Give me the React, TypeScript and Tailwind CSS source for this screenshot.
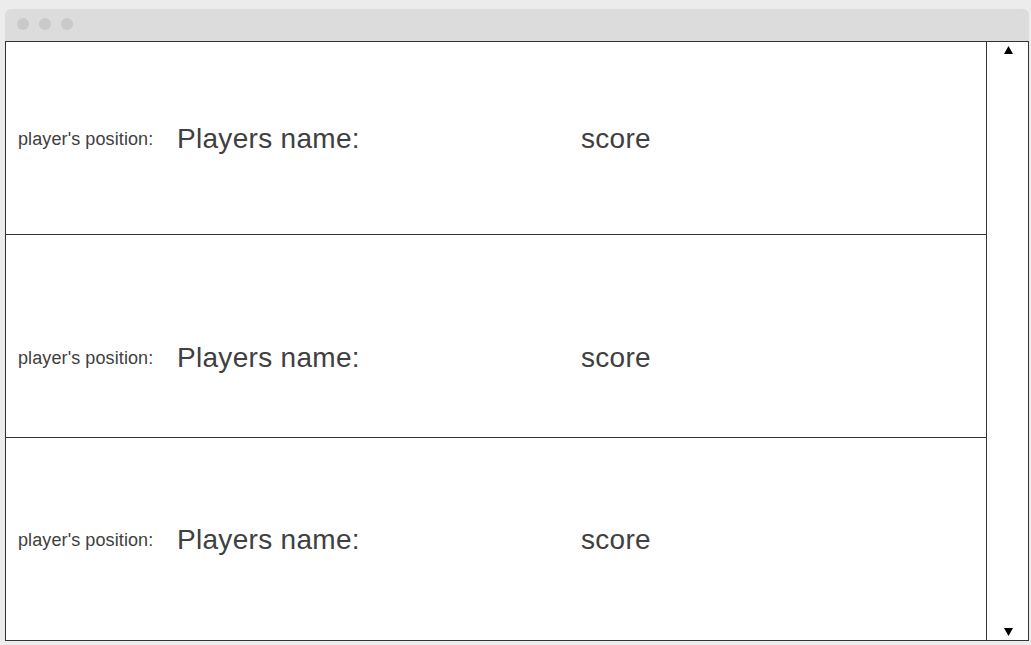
const rows = [
  { h: 'h-[193px]', extra: 'pt-[2px]' },
  { h: 'h-[203px]', extra: 'pt-[44px]' },
  { h: 'h-[202px]', extra: 'pt-[2px]' },
];

function Arrow({ down }: { down?: boolean }) {
  return (
    <svg width="9" height="8" viewBox="0 0 9 8" className="block">
      {down ? <polygon points="0,0 9,0 4.5,8" fill="#000" /> : <polygon points="4.5,0 9,8 0,8" fill="#000" />}
    </svg>
  );
}

export default function App() {
  return (
    <div
      className="w-[1031px] h-[645px] bg-[#ececec] pt-[9px] pl-[5px] text-[#404040]"
      style={{ fontFamily: '"Liberation Sans", Arial, sans-serif' }}
    >
      <div className="w-[1024px]">
        <div className="h-[32px] bg-[#dcdcdc] rounded-t-[6px] flex items-center gap-[10px] pl-[12px] pb-[2px]">
          <div className="w-[12px] h-[12px] rounded-full bg-[#c9c9c9]" />
          <div className="w-[12px] h-[12px] rounded-full bg-[#c9c9c9]" />
          <div className="w-[12px] h-[12px] rounded-full bg-[#c9c9c9]" />
        </div>
        <div className="h-[600px] border border-[#333] bg-white flex">
          <div className="flex-1 flex flex-col">
            {rows.map((r, i) => (
              <div
                key={i}
                className={`${r.h} ${r.extra} flex items-center pl-[12px] ${i < 2 ? 'border-b border-[#333]' : ''}`}
              >
                <div className="w-[159px] text-[18px] tracking-[0.1px]">player's position:</div>
                <div className="w-[404px] text-[28px] tracking-[0.3px]">Players name:</div>
                <div className="text-[28px] tracking-[0.3px]">score</div>
              </div>
            ))}
          </div>
          <div className="w-[42px] border-l border-[#333] flex flex-col items-center justify-between pt-[4px] pb-[4px] pl-[1px]">
            <Arrow />
            <Arrow down />
          </div>
        </div>
      </div>
    </div>
  );
}
